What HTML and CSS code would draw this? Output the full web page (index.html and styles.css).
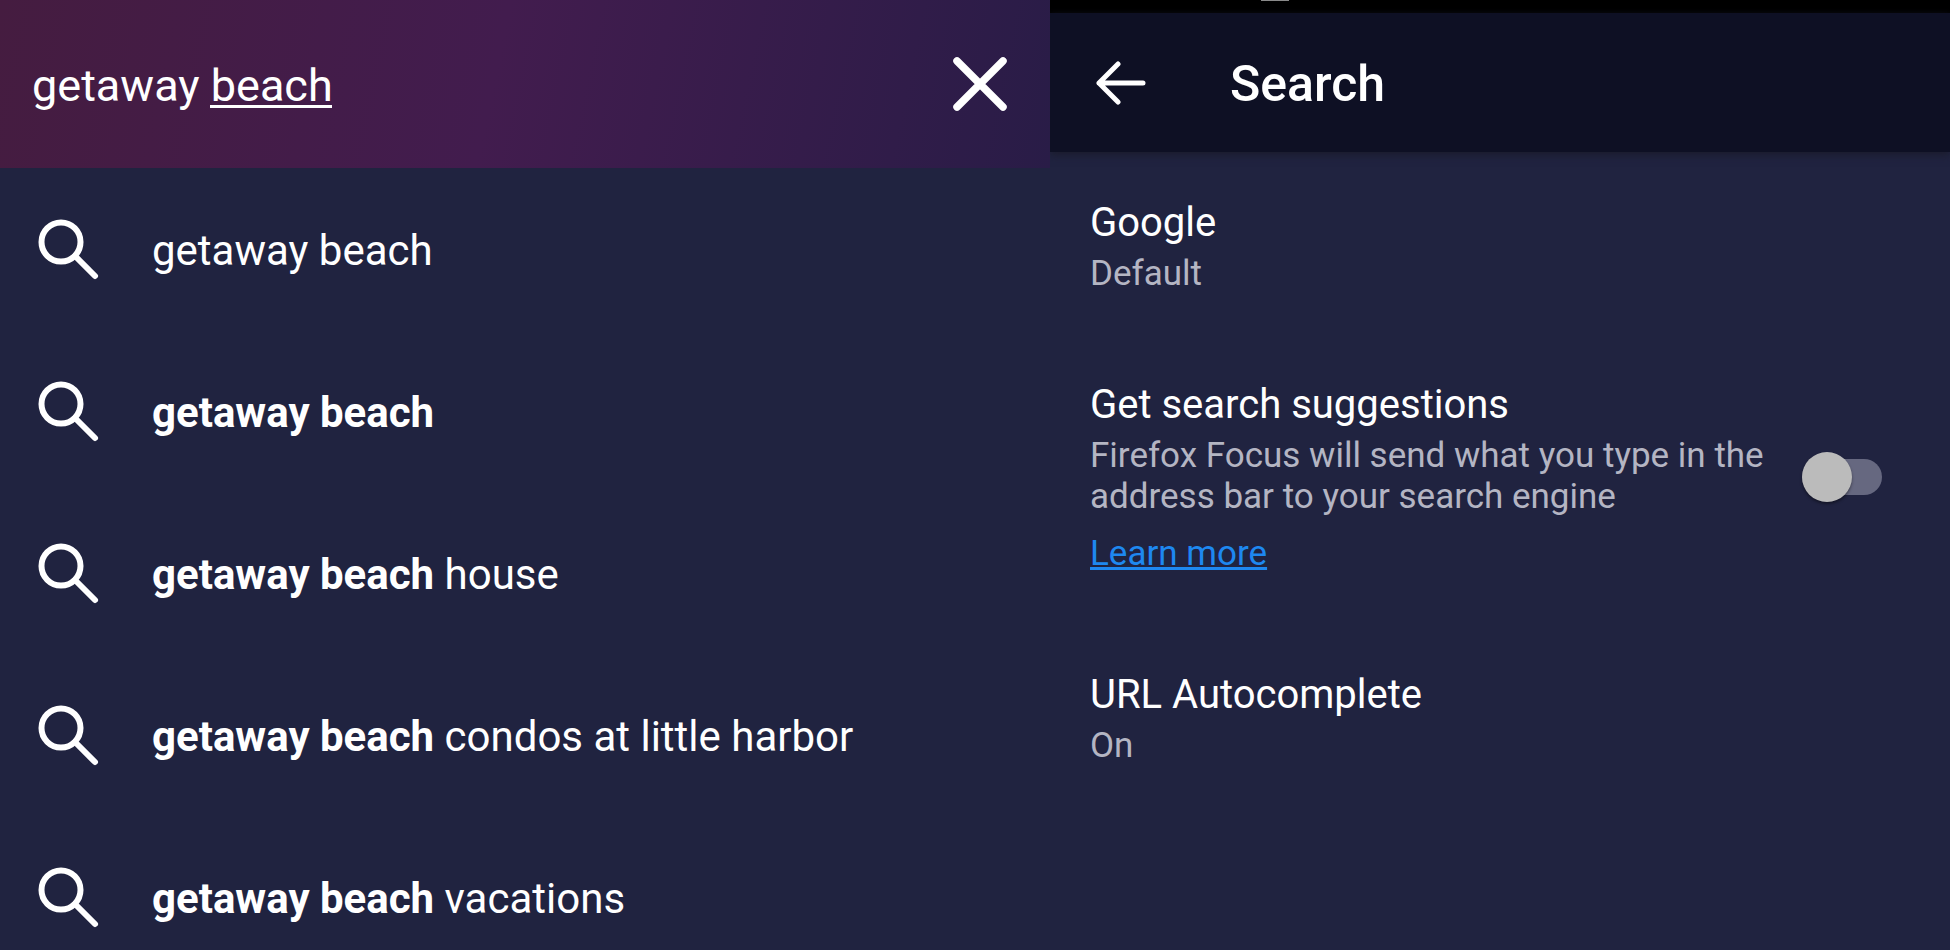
FILE: index.html
```html
<!DOCTYPE html>
<html lang="en">
<head>
    <meta charset="utf-8"/>
    <title>Search</title>
    <link rel="stylesheet" href="styles.css">
</head>

<body>
<svg class="sprite" aria-hidden="true">
    <symbol id="magnifier" viewBox="0 0 62 62">
        <circle cx="23" cy="23" r="19.5" fill="none" stroke="currentColor" stroke-width="6"/>
        <path d="M37 37L57 57" stroke="currentColor" stroke-width="6" stroke-linecap="round"/>
    </symbol>
</svg>

<section class="panel">
    <form class="searchbar">
        <input type="text" class="query" aria-label="Search" value="getaway beach" spellcheck="false" autocomplete="off">
        <button type="reset" class="icon-button" aria-label="Clear">
            <svg width="54" height="54" viewBox="0 0 54 54">
                <path d="M4 4L50 50M50 4L4 50" stroke="currentColor" stroke-width="7.5" stroke-linecap="round"/>
            </svg>
        </button>
    </form>
    <ul class="suggestions">
        <li><a href="#"><svg><use href="#magnifier"/></svg><span>getaway beach</span></a></li>
        <li><a href="#"><svg><use href="#magnifier"/></svg><span><b>getaway beach</b></span></a></li>
        <li><a href="#"><svg><use href="#magnifier"/></svg><span><b>getaway beach</b> house</span></a></li>
        <li><a href="#"><svg><use href="#magnifier"/></svg><span><b>getaway beach</b> condos at little harbor</span></a></li>
        <li><a href="#"><svg><use href="#magnifier"/></svg><span><b>getaway beach</b> vacations</span></a></li>
    </ul>
</section>

<section class="panel">
    <div class="statusbar"><i></i></div>
    <header class="toolbar">
        <button type="button" class="icon-button" aria-label="Back">
            <svg width="50" height="44" viewBox="0 0 50 44">
                <path d="M47 22H3M22 3L3 22L22 41" fill="none" stroke="currentColor" stroke-width="5" stroke-linecap="round" stroke-linejoin="round"/>
            </svg>
        </button>
        <h1>Search</h1>
    </header>
    <div class="settings">
        <div class="setting">
            <h2>Google</h2>
            <p>Default</p>
        </div>
        <div class="setting with-switch">
            <div>
                <h2><label for="suggest">Get search suggestions</label></h2>
                <p>Firefox Focus will send what you type in the address bar to your search engine</p>
                <a class="learn" href="#">Learn more</a>
            </div>
            <input type="checkbox" class="switch" id="suggest">
        </div>
        <div class="setting">
            <h2>URL Autocomplete</h2>
            <p>On</p>
        </div>
    </div>
</section>
</body>
</html>
```
FILE: styles.css
```css
* {
    box-sizing: border-box;
}

body {
    margin: 0;
    height: 100vh;
    overflow: hidden;
    display: grid;
    grid-template-columns: 7fr 6fr;
    background-color: #202340;
    color: #ffffff;
    font-family: Roboto, sans-serif;
}

h1, h2, p, ul {
    margin: 0;
    padding: 0;
    font-weight: 400;
}

.sprite {
    display: none;
}

.panel {
    min-width: 0;
    overflow: hidden;
}

.icon-button {
    display: flex;
    padding: 0;
    border: none;
    background: none;
    color: inherit;
    cursor: pointer;
}

.searchbar {
    display: flex;
    align-items: center;
    height: 168px;
    padding: 0 43px 0 32px;
    background: linear-gradient(102deg, #451c40 0%, #421c4e 47%, #291c47 100%);
}

/* the bar under the second word marks the text still being composed */
.query {
    flex: 1;
    min-width: 0;
    height: 56px;
    padding: 2px 0 0;
    border: none;
    outline: none;
    color: inherit;
    font-family: inherit;
    font-size: 45px;
    background: linear-gradient(#ffffff, #ffffff) 178px 49px / 122px 3px no-repeat;
}

.suggestions {
    padding-top: 1px;
    list-style: none;
}

.suggestions a {
    display: flex;
    align-items: center;
    gap: 52px;
    height: 162px;
    padding-left: 38px;
    color: inherit;
    font-size: 42px;
    text-decoration: none;
    white-space: nowrap;
}

.suggestions svg {
    width: 62px;
    height: 62px;
}

.statusbar {
    height: 13px;
    padding-left: 211px;
    background-color: #000000;
}

.statusbar i {
    display: block;
    width: 28px;
    height: 1px;
    background-color: #8a8a8a;
}

.toolbar {
    display: flex;
    align-items: center;
    gap: 84px;
    height: 139px;
    padding-left: 46px;
    background-color: #0e1024;
    box-shadow: 0 3px 8px #1b1c2c;
}

.toolbar h1 {
    padding-top: 3px;
    font-size: 50px;
    font-weight: 500;
}

.settings {
    padding: 45px 68px 0 40px;
}

.setting {
    margin-bottom: 85px;
}

.setting h2 {
    font-size: 40px;
    line-height: 52px;
}

.setting p {
    margin-top: 4px;
    color: #b4b5c3;
    font-size: 35px;
    line-height: 41px;
}

.with-switch {
    display: flex;
    align-items: center;
    justify-content: space-between;
    gap: 36px;
    margin-bottom: 89px;
    padding-bottom: 6px;
}

.learn {
    display: inline-block;
    margin-top: 16px;
    color: #1e88f0;
    font-size: 35px;
    line-height: 41px;
}

.switch {
    flex: none;
    position: relative;
    width: 80px;
    height: 36px;
    margin: 0;
    appearance: none;
    border-radius: 18px;
    background-color: #666880;
}

.switch::before {
    content: "";
    position: absolute;
    top: -7px;
    left: 0;
    width: 50px;
    height: 50px;
    border-radius: 50%;
    background-color: #bbbbbb;
    box-shadow: 0 2px 3px rgba(0, 0, 0, 0.4);
}

.switch:checked::before {
    left: 30px;
}
```
